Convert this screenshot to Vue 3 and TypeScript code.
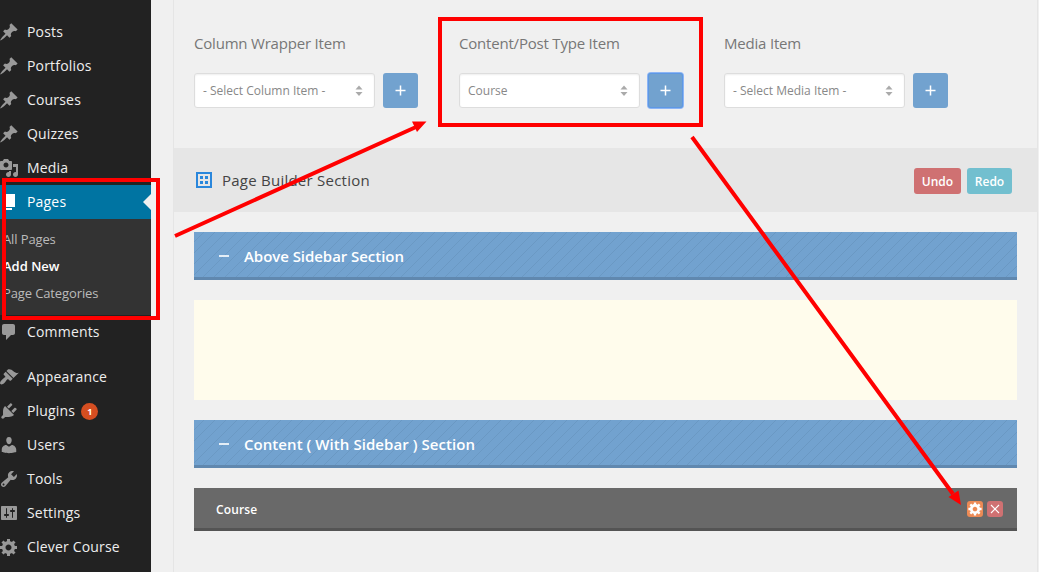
<script setup lang="ts">
interface MenuItem {
  label: string
  icon: string
  badge?: number
  current?: boolean
  gap?: boolean
}

const pin =
  'M10.44 3.02l1.82-1.82 6.36 6.35-1.83 1.82c-1.05-.68-2.48-.57-3.41.36l-.75.75c-.92.93-1.04 2.35-.35 3.41l-1.83 1.82-2.41-2.41-2.8 2.79c-.42.42-3.38 2.71-3.8 2.29s1.86-3.39 2.28-3.81l2.79-2.79L4.1 9.36l1.83-1.82c1.05.69 2.48.57 3.4-.36l.75-.75c.93-.92 1.05-2.35.36-3.41z'
const gear =
  'M18 12h-2.18c-.17.7-.44 1.35-.81 1.93l1.54 1.54-2.1 2.1-1.54-1.54c-.58.36-1.23.63-1.91.79V19H8v-2.18c-.68-.16-1.33-.43-1.91-.79l-1.54 1.54-2.12-2.12 1.54-1.54c-.36-.58-.63-1.23-.79-1.91H1V9.03h2.17c.16-.7.44-1.35.8-1.94L2.43 5.55l2.1-2.1 1.54 1.54c.58-.37 1.24-.64 1.93-.81V2h3v2.18c.68.16 1.33.43 1.91.79l1.54-1.54 2.12 2.12-1.54 1.54c.36.59.64 1.24.8 1.94H18V12zm-8.5 1.5c1.66 0 3-1.34 3-3s-1.34-3-3-3-3 1.34-3 3 1.34 3 3 3z'

const menu: MenuItem[] = [
  { label: 'Posts', icon: pin },
  { label: 'Portfolios', icon: pin },
  { label: 'Courses', icon: pin },
  { label: 'Quizzes', icon: pin },
  {
    label: 'Media',
    icon: 'M13 11V4c0-.55-.45-1-1-1h-1.67L9 1H5L3.67 3H2c-.55 0-1 .45-1 1v7c0 .55.45 1 1 1h10c.55 0 1-.45 1-1zM7 4.5c1.38 0 2.5 1.12 2.5 2.5S8.38 9.5 7 9.5 4.5 8.38 4.5 7 5.62 4.5 7 4.5zM14 6h5v10.5c0 1.38-1.12 2.5-2.5 2.5S14 17.88 14 16.5s1.12-2.5 2.5-2.5c.17 0 .34.02.5.05V9h-3V6zm-4 8.05V13h2v3.5c0 1.38-1.12 2.5-2.5 2.5S7 17.88 7 16.5 8.12 14 9.5 14c.17 0 .34.02.5.05z',
  },
  { label: 'Pages', icon: 'M6 15V2h10v13H6zm-1 1h8v2H3V5h2v11z', current: true },
  {
    label: 'Comments',
    icon: 'M5 2h9c1.1 0 2 .9 2 2v7c0 1.1-.9 2-2 2h-2l-5 5v-5H5c-1.1 0-2-.9-2-2V4c0-1.1.9-2 2-2z',
  },
  {
    label: 'Appearance',
    gap: true,
    icon: 'M14.48 11.06L7.41 3.99l1.5-1.5c.5-.56 2.3-.47 3.51.32 1.21.8 1.43 1.28 2.91 2.1 1.18.64 2.45 1.26 4.45.85zm-.71.71L6.7 4.7 4.93 6.47c-.39.39-.39 1.02 0 1.41l1.06 1.06c.39.39.39 1.03 0 1.42-.6.6-1.43 1.11-2.21 1.69-.35.26-.7.53-1.01.84C1.43 14.23.4 16.08 1.4 17.07c.99 1 2.84-.03 4.18-1.36.31-.31.58-.66.85-1.02.57-.78 1.08-1.61 1.69-2.21.39-.39 1.02-.39 1.41 0l1.06 1.06c.39.39 1.02.39 1.41 0z',
  },
  {
    label: 'Plugins',
    badge: 1,
    icon: 'M13.11 4.36L9.87 7.6 8 5.73l3.24-3.24c.35-.34 1.05-.2 1.56.32.52.51.66 1.21.31 1.55zm-8 1.77l.91-1.12 9.01 9.01-1.19.84c-.71.71-2.63 1.16-3.82 1.16H6.14L4.9 17.26c-.59.59-1.54.59-2.12 0-.59-.58-.59-1.53 0-2.12l1.24-1.24v-3.88c0-1.13.4-3.19 1.09-3.89zm7.26 3.97l3.24-3.24c.34-.35 1.04-.21 1.55.31.52.51.66 1.21.31 1.55l-3.24 3.25z',
  },
  {
    label: 'Users',
    icon: 'M10 9.25c-2.27 0-2.73-3.44-2.73-3.44C7 4.02 7.82 2 9.97 2c2.16 0 2.98 2.02 2.71 3.81 0 0-.41 3.44-2.68 3.44zm0 2.57L12.72 10c2.39 0 4.52 2.33 4.52 4.53v2.49s-3.65 1.13-7.24 1.13c-3.65 0-7.24-1.13-7.24-1.13v-2.49c0-2.25 1.94-4.48 4.47-4.48z',
  },
  {
    label: 'Tools',
    icon: 'M16.68 9.77c-1.34 1.34-3.3 1.67-4.95.99l-5.41 6.52c-.99.99-2.59.99-3.58 0s-.99-2.59 0-3.57l6.52-5.42c-.68-1.65-.35-3.61.99-4.95 1.28-1.28 3.12-1.62 4.72-1.06l-2.89 2.89 2.82 2.82 2.86-2.87c.53 1.58.18 3.39-1.08 4.65zM3.81 16.21c.4.39 1.04.39 1.43 0 .4-.4.4-1.04 0-1.43-.39-.4-1.03-.4-1.43 0-.39.39-.39 1.03 0 1.43z',
  },
  {
    label: 'Settings',
    icon: 'M18 16V4c0-.55-.45-1-1-1H3c-.55 0-1 .45-1 1v12c0 .55.45 1 1 1h14c.55 0 1-.45 1-1zM8 11h1c.55 0 1 .45 1 1s-.45 1-1 1H8v1.5c0 .28-.22.5-.5.5s-.5-.22-.5-.5V13H6c-.55 0-1-.45-1-1s.45-1 1-1h1V5.5c0-.28.22-.5.5-.5s.5.22.5.5V11zm5-2h-1c-.55 0-1-.45-1-1s.45-1 1-1h1V5.5c0-.28.22-.5.5-.5s.5.22.5.5V7h1c.55 0 1 .45 1 1s-.45 1-1 1h-1v5.5c0 .28-.22.5-.5.5s-.5-.22-.5-.5V9z',
  },
  { label: 'Clever Course', icon: gear },
]

const submenu = [
  { label: 'All Pages', active: false },
  { label: 'Add New', active: true },
  { label: 'Page Categories', active: false },
]

const pickers = [
  { title: 'Column Wrapper Item', value: '- Select Column Item -', focused: false },
  { title: 'Content/Post Type Item', value: 'Course', focused: true },
  { title: 'Media Item', value: '- Select Media Item -', focused: false },
]
</script>

<template>
  <div class="screen">
    <nav class="sidebar">
      <template v-for="item in menu" :key="item.label">
        <a class="menu-item" :class="{ current: item.current, gap: item.gap }">
          <svg class="menu-icon" viewBox="0 0 20 20"><path :d="item.icon" /></svg>
          <span class="menu-label">{{ item.label }}</span>
          <span v-if="item.badge" class="badge">{{ item.badge }}</span>
        </a>
        <div v-if="item.current" class="submenu">
          <a v-for="sub in submenu" :key="sub.label" :class="{ active: sub.active }">{{ sub.label }}</a>
        </div>
      </template>
    </nav>

    <main class="panel">
      <section class="pickers">
        <div v-for="p in pickers" :key="p.title" class="picker">
          <h4>{{ p.title }}</h4>
          <div class="picker-row">
            <div class="select">
              <span>{{ p.value }}</span>
              <svg width="8" height="12" viewBox="0 0 8 12"><path d="M0.5 4.5L4 0.5l3.5 4zM0.5 7L4 11l3.5-4z" /></svg>
            </div>
            <button class="add" :class="{ focused: p.focused }">
              <svg width="11" height="11" viewBox="0 0 11 11"><path d="M5.5 0.5v10M0.5 5.5h10" /></svg>
            </button>
          </div>
        </div>
      </section>

      <header class="builder-head">
        <svg class="grid-icon" width="16" height="16" viewBox="0 0 16 16">
          <path class="frame" d="M1 1h14v14H1z" />
          <path d="M4 4h3v3H4zM9 4h3v3H9zM4 9h3v3H4zM9 9h3v3H9z" />
        </svg>
        <h3>Page Builder Section</h3>
        <button class="undo">Undo</button>
        <button class="redo">Redo</button>
      </header>

      <div class="sections">
        <div class="section-bar"><i class="minus"></i><span>Above Sidebar Section</span></div>
        <div class="drop-zone"></div>
        <div class="section-bar wide"><i class="minus"></i><span>Content ( With Sidebar ) Section</span></div>
        <div class="item-bar">
          <span>Course</span>
          <button class="mini edit">
            <svg width="14" height="14" viewBox="0.5 1.5 18 18"><path :d="gear" /></svg>
          </button>
          <button class="mini remove">
            <svg width="10" height="10" viewBox="0 0 10 10"><path d="M1 1l8 8M9 1l-8 8" /></svg>
          </button>
        </div>
      </div>
    </main>

    <svg class="annotations" width="1039" height="572" viewBox="0 0 1039 572">
      <rect x="4" y="180" width="154" height="138" />
      <rect x="440" y="19" width="261" height="106" />
      <path class="line" d="M175 236L416 127M692 137L953 494" />
      <path class="head" d="M426.500 121.500L417 132 412 121.500zM961 505L948.500 497 958.500 490.500z" />
    </svg>
  </div>
</template>

<style>
body {
  margin: 0;
  overflow: hidden;
}
</style>

<style scoped>
.screen {
  position: relative;
  display: flex;
  width: 1039px;
  height: 572px;
  overflow: hidden;
  background: #f0f0f0;
  font-family: 'Open Sans', 'Noto Sans', sans-serif;
}
.sidebar {
  box-sizing: border-box;
  width: 151px;
  padding-top: 15px;
  background: #222;
}
.menu-item {
  position: relative;
  display: flex;
  align-items: center;
  height: 34px;
  color: #eee;
  font-size: 14px;
}
.menu-icon {
  width: 20px;
  height: 20px;
  margin: 0 8px 0 -1px;
  fill: #999;
}
.menu-label {
  padding-bottom: 2px;
  letter-spacing: 0.18px;
}
.gap {
  margin-top: 11px;
}
.current {
  background: #0074a2;
  color: #fff;
}
.current .menu-icon {
  fill: #fff;
}
.current::after {
  content: '';
  position: absolute;
  right: 0;
  top: 9px;
  border: 8px solid transparent;
  border-left: 0;
  border-right-color: #f0f0f0;
}
.badge {
  width: 17px;
  height: 17px;
  margin-left: 6px;
  border-radius: 50%;
  background: #d54e21;
  color: #fff;
  font-size: 9px;
  font-weight: 700;
  line-height: 17px;
  text-align: center;
}
.submenu {
  display: flex;
  flex-direction: column;
  box-sizing: border-box;
  height: 96px;
  padding: 7px 0 0 3px;
  background: #333;
  color: #bbb;
  font-size: 13px;
  letter-spacing: -0.12px;
  line-height: 27px;
}
.submenu .active {
  color: #fff;
  font-weight: 600;
  letter-spacing: 0;
}
.panel {
  box-sizing: border-box;
  width: 865px;
  margin-left: 22px;
  border: solid #e5e5e5;
  border-width: 0 1px;
}
.pickers {
  display: flex;
  box-sizing: border-box;
  height: 148px;
  padding: 32px 0 0 20px;
}
.picker {
  width: 265px;
}
h3,
h4 {
  margin: 0;
  font-weight: 400;
}
h4 {
  height: 41px;
  color: #777;
  font-size: 15px;
  font-weight: 500;
  letter-spacing: -0.2px;
  line-height: 22px;
}
.picker-row {
  display: flex;
  gap: 8px;
}
.select {
  display: flex;
  align-items: center;
  justify-content: space-between;
  box-sizing: border-box;
  width: 181px;
  height: 35px;
  padding: 0 11px 0 8px;
  border: 1px solid #ddd;
  border-radius: 3px;
  background: #fff;
  box-shadow: inset 0 1px 2px rgba(0, 0, 0, 0.07);
  color: #888;
  font-size: 12px;
}
.select svg {
  fill: #aaa;
}
button {
  display: flex;
  align-items: center;
  justify-content: center;
  padding: 0;
  border: 0;
  border-radius: 3px;
  color: #fff;
  font-family: inherit;
}
.add {
  width: 35px;
  height: 35px;
  background: #72a2cf;
}
.add path {
  stroke: #fff;
  stroke-width: 1.5;
}
.focused {
  box-shadow: inset 0 0 0 1px #5e98e4, 0 0 0 1px #8cb5f5;
}
.builder-head {
  display: flex;
  align-items: center;
  box-sizing: border-box;
  height: 64px;
  padding: 0 25px 0 22px;
  background: #e6e6e6;
}
.grid-icon {
  fill: #2a87dc;
}
.grid-icon .frame {
  fill: none;
  stroke: #2a87dc;
  stroke-width: 2;
}
h3 {
  margin: 0 auto 0 10px;
  color: #444;
  font-size: 15px;
  letter-spacing: 0.24px;
}
.undo,
.redo {
  height: 26px;
  margin-top: 2px;
  font-size: 12px;
  font-weight: 600;
}
.undo {
  width: 47px;
  margin-right: 6px;
  background: #cf7172;
}
.redo {
  width: 45px;
  background: #72bfcf;
}
.sections {
  display: flex;
  flex-direction: column;
  gap: 20px;
  padding: 20px;
}
.section-bar {
  display: flex;
  align-items: center;
  box-sizing: border-box;
  height: 48px;
  padding: 3px 0 0 25px;
  border-bottom: 3px solid #6088af;
  background: #72a2cf
    repeating-linear-gradient(135deg, transparent 0 6.9px, rgba(80, 120, 155, 0.26) 7.1px 7.6px, transparent 7.778px);
  color: #fff;
  font-size: 15px;
  font-weight: 600;
  letter-spacing: -0.05px;
}
.wide {
  letter-spacing: 0.06px;
}
.minus {
  width: 10px;
  height: 2px;
  margin-right: 15px;
  background: #e3edf6;
}
.drop-zone {
  height: 100px;
  background: #fffcec;
}
.item-bar {
  display: flex;
  align-items: center;
  box-sizing: border-box;
  height: 43px;
  padding: 2px 14px 0 22px;
  border-bottom: 3px solid #545454;
  background: #696969;
  color: #fff;
  font-size: 12px;
  font-weight: 600;
}
.item-bar span {
  margin-right: auto;
  letter-spacing: 0.15px;
}
.mini {
  width: 16px;
  height: 16px;
  margin-left: 4px;
}
.edit {
  background: #ec8a55;
}
.edit svg {
  fill: #fff;
}
.remove {
  background: #cf7172;
}
.remove path {
  stroke: #fff;
  stroke-width: 1.1;
}
.annotations {
  position: absolute;
  inset: 0;
  pointer-events: none;
}
.annotations rect,
.annotations .line {
  fill: none;
  stroke: #f00;
  stroke-width: 4;
}
.annotations .head {
  fill: #f00;
}
</style>
